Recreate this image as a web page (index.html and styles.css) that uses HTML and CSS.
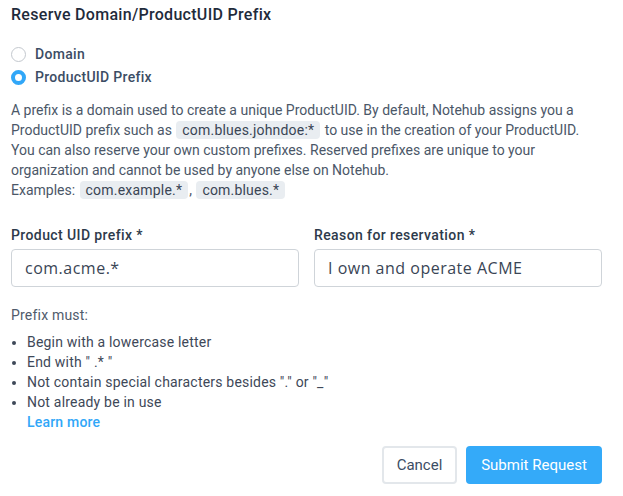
FILE: index.html
```html
<!DOCTYPE html>
<html lang="en">
<head>
<meta charset="utf-8">
<title>Reserve Domain/ProductUID Prefix</title>
<link rel="stylesheet" href="styles.css">
</head>
<body>
<div class="dialog">
  <h1 class="title">Reserve Domain/ProductUID Prefix</h1>
  <div class="radios">
    <label class="radio"><span class="dot"></span>Domain</label>
    <label class="radio"><span class="dot checked"></span>ProductUID Prefix</label>
  </div>
  <p class="desc">A prefix is a domain used to create a unique ProductUID. By default, Notehub assigns you a ProductUID prefix such as <code>com.blues.johndoe:*</code> to use in the creation of your ProductUID. You can also reserve your own custom prefixes. Reserved prefixes are unique to your organization and cannot be used by anyone else on Notehub.<br>Examples: <code>com.example.*</code>, <code>com.blues.*</code></p>
  <div class="fields">
    <div class="field">
      <div class="label">Product UID prefix *</div>
      <div class="input">com.acme.*</div>
    </div>
    <div class="field">
      <div class="label">Reason for reservation *</div>
      <div class="input">I own and operate ACME</div>
    </div>
  </div>
  <div class="rules">
    <div class="rules-head">Prefix must:</div>
    <ul>
      <li>Begin with a lowercase letter</li>
      <li>End with " .* "</li>
      <li>Not contain special characters besides "." or "_"</li>
      <li>Not already be in use</li>
    </ul>
    <a class="learn" href="#">Learn more</a>
  </div>
  <div class="actions">
    <button class="btn cancel">Cancel</button>
    <button class="btn submit">Submit Request</button>
  </div>
</div>
</body>
</html>
```
FILE: styles.css
```css
* { box-sizing: border-box; }
html, body { margin: 0; padding: 0; background: #fff; }
body { font-family: Roboto, "Liberation Sans", sans-serif; color: #4b5768; }
.dialog { padding: 4px 21px 0 11px; width: 623px; }
.title { font-size: 16px; font-weight: 500; color: #1f2b3b; margin: 0; line-height: 22px; letter-spacing: 0.3px; }
.radios { display: flex; flex-direction: column; gap: 5px; margin-top: 19px; }
.radio { display: flex; align-items: center; gap: 9px; font-size: 14px; font-weight: 500; color: #3c4d64; line-height: 18px; letter-spacing: 0.3px; }
.dot { width: 15px; height: 15px; border-radius: 50%; border: 1px solid #c3c8ce; background: #fff; flex: none; }
.dot.checked { border: 4px solid #31a7f8; background: #fff; }
.desc { margin: 14px 0 0; font-size: 14px; line-height: 20px; color: #4b5768; }
code { display: inline-block; font-family: Roboto, "Liberation Sans", sans-serif; font-size: 14px; line-height: 18px; color: #3a4555; background: #e9edf1; border-radius: 4px; padding: 0 6px; margin: 0 1px; letter-spacing: 0.2px; }
.fields { display: flex; gap: 15px; margin-top: 26px; }
.field { flex: 1; }
.label { font-size: 14px; font-weight: 500; color: #2d3a4b; line-height: 18px; margin-bottom: 5px; letter-spacing: 0.4px; }
.input { height: 38px; border: 1px solid #cfd4d9; border-radius: 4px; padding: 0 13px; display: flex; align-items: center; font-family: "Open Sans", Roboto, sans-serif; font-size: 16px; color: #3a4555; letter-spacing: 0.5px; }
.rules { margin-top: 18px; font-size: 14px; line-height: 20px; letter-spacing: 0.2px; }
.rules-head { color: #505b6b; }
.rules ul { margin: 7px 0 0; padding-left: 16px; color: #3e4858; }
.learn { display: block; padding-left: 16px; color: #31a7f8; font-weight: 500; text-decoration: none; }
.actions { display: flex; justify-content: flex-end; gap: 9px; margin-top: 14px; }
.btn { height: 38px; border-radius: 4px; font-family: Roboto, "Liberation Sans", sans-serif; font-size: 15px; padding: 0 12px; }
.cancel { background: #fff; border: 2px solid #e3e7eb; color: #3c4d64; width: 75px; }
.submit { background: #34aaf9; border: none; color: #fff; width: 136px; }
```
